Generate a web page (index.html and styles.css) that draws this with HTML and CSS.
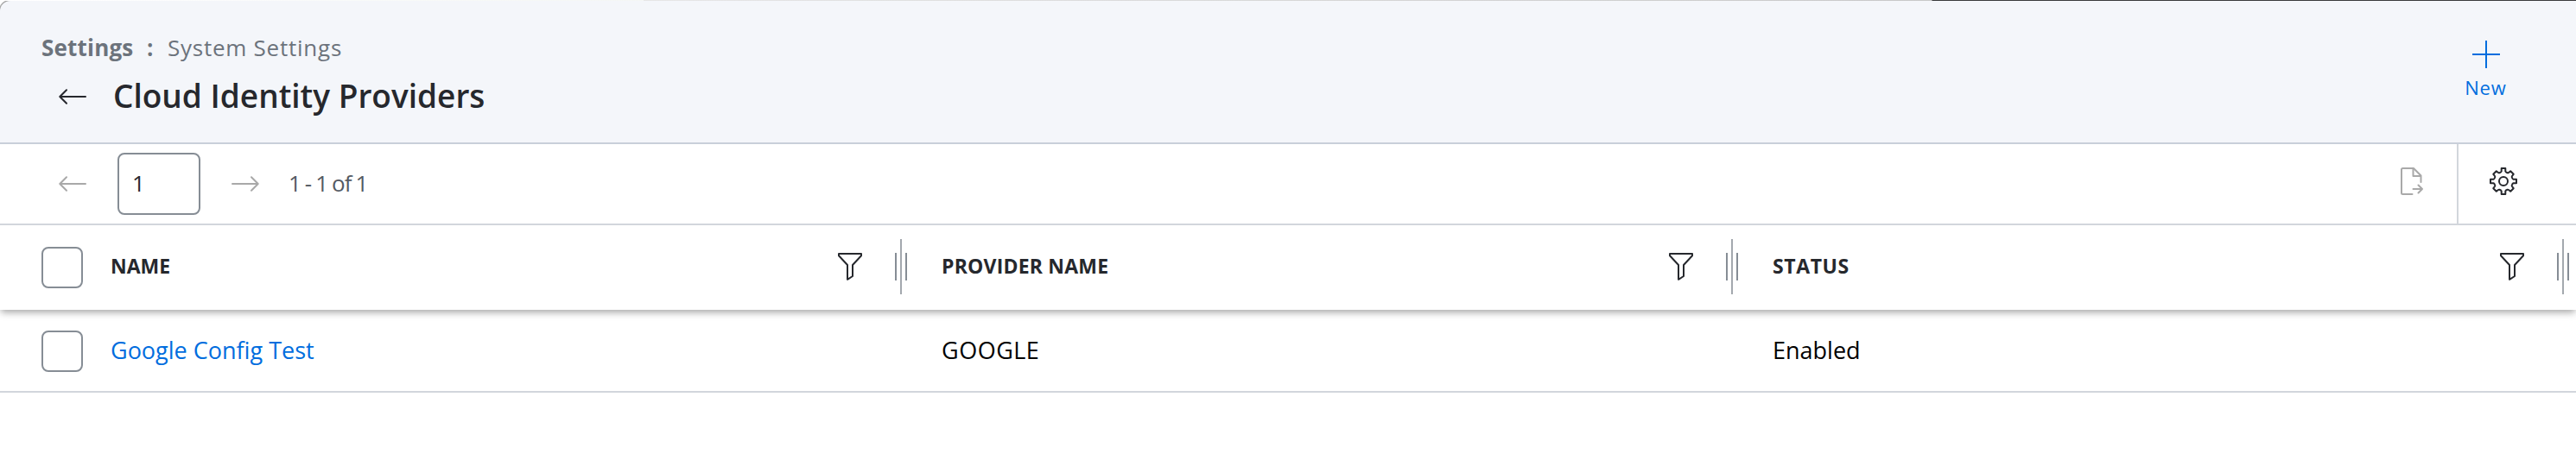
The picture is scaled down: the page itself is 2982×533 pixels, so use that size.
FILE: index.html
```html
<!DOCTYPE html>
<html lang="en">
<head>
    <meta charset="UTF-8">
    <meta name="viewport" content="width=device-width, initial-scale=1.0">
    <title>Cloud Identity Providers</title>
    <link rel="stylesheet" href="styles.css">
</head>
<body>
    <svg class="defs" width="0" height="0">
        <symbol id="arrow" viewBox="0 0 32 18">
            <path d="M31 9H1.5M9 1.2L1.3 9L9 16.8" fill="none" stroke="currentColor" stroke-width="2" stroke-linecap="round" stroke-linejoin="round"/>
        </symbol>
        <symbol id="funnel" viewBox="0 0 28 32">
            <path d="M1 1H27V3.2L17 14V27L11 30.8V14L1 3.2Z" fill="none" stroke="currentColor" stroke-width="2" stroke-linejoin="round"/>
        </symbol>
    </svg>

    <div class="top-edge"></div>
    <header class="page-header">
        <div class="heading">
            <nav class="breadcrumb">
                <a class="crumb-root">Settings</a>
                <span class="crumb-sep">:</span>
                <a class="crumb">System Settings</a>
            </nav>
            <div class="title-row">
                <svg class="arrow" width="32" height="18"><use href="#arrow"/></svg>
                <h1>Cloud Identity Providers</h1>
            </div>
        </div>
        <button class="new-button" type="button">
            <svg width="32" height="32" viewBox="0 0 32 32">
                <path d="M16 0V32M0 16H32" fill="none" stroke="currentColor" stroke-width="2"/>
            </svg>
            <span>New</span>
        </button>
    </header>

    <div class="toolbar">
        <div class="pager">
            <svg class="arrow" width="32" height="18"><use href="#arrow"/></svg>
            <input class="page-input" type="text" value="1">
            <svg class="arrow next" width="32" height="18"><use href="#arrow"/></svg>
            <span class="range">1 - 1 of 1</span>
        </div>
        <div class="tools">
            <svg class="export" width="26" height="32" viewBox="0 0 26 32" fill="none" stroke="currentColor" stroke-width="2" stroke-linecap="round" stroke-linejoin="round">
                <path d="M13.5 31H2.5Q1 31 1 29.5V2.5Q1 1 2.5 1H15L23.5 9.5V17"/>
                <path d="M14.5 1.5V10H23"/>
                <path d="M14.5 25H25M20.5 20.5L25 25L20.5 29.5"/>
            </svg>
            <div class="settings">
                <svg width="32" height="32" viewBox="0 0 32 32" fill="none" stroke="currentColor" stroke-width="2" stroke-linejoin="round">
                    <path d="M13.7 1H18.3V4.5Q18.5 5.4 20.5 6.2Q21.3 6.5 22 6L24.2 4.3L27.7 7.8L26 10Q25.5 10.7 25.8 11.5Q26.6 13.5 27.5 13.7H31V18.3H27.5Q26.6 18.5 25.8 20.5Q25.5 21.3 26 22L27.7 24.2L24.2 27.7L22 26Q21.3 25.5 20.5 25.8Q18.5 26.6 18.3 27.5V31H13.7V27.5Q13.5 26.6 11.5 25.8Q10.7 25.5 10 26L7.8 27.7L4.3 24.2L6 22Q6.5 21.3 6.2 20.5Q5.4 18.5 4.5 18.3H1V13.7H4.5Q5.4 13.5 6.2 11.5Q6.5 10.7 6 10L4.3 7.8L7.8 4.3L10 6Q10.7 6.5 11.5 6.2Q13.5 5.4 13.7 4.5Z"/>
                    <circle cx="16" cy="16" r="5"/>
                </svg>
            </div>
        </div>
    </div>

    <div class="table">
        <div class="row head">
            <div class="check-cell"><input type="checkbox"></div>
            <div class="cell name">
                <span>NAME</span>
                <svg class="funnel" width="28" height="32"><use href="#funnel"/></svg>
                <div class="resizer"><i></i><i></i><i></i></div>
            </div>
            <div class="cell provider">
                <span>PROVIDER NAME</span>
                <svg class="funnel" width="28" height="32"><use href="#funnel"/></svg>
                <div class="resizer"><i></i><i></i><i></i></div>
            </div>
            <div class="cell status">
                <span>STATUS</span>
                <svg class="funnel" width="28" height="32"><use href="#funnel"/></svg>
                <div class="resizer"><i></i><i></i><i></i></div>
            </div>
        </div>
        <div class="row item">
            <div class="check-cell"><input type="checkbox"></div>
            <div class="cell name"><a>Google Config Test</a></div>
            <div class="cell provider">GOOGLE</div>
            <div class="cell status">Enabled</div>
        </div>
    </div>
</body>
</html>
```
FILE: styles.css
```css
* {
    box-sizing: border-box;
}
body {
    margin: 0;
    background-color: #fff;
    color: #000;
    font-family: "Open Sans", Lato, sans-serif;
    font-size: 27px;
    overflow: hidden;
}
svg {
    display: block;
    flex: none;
}
.defs {
    position: absolute;
}
.top-edge {
    height: 1px;
    background: linear-gradient(to right, #fff 0, #f4f6f4 745px, #e6e6e6 745px, #c8c8c8 2236px, #3a3a3c 2237px);
}

/* header */
.page-header {
    display: flex;
    justify-content: space-between;
    height: 166px;
    padding: 38px 80px 0 48px;
    background-color: #f4f6fa;
    border-bottom: 2px solid #c9cfda;
    border-top-left-radius: 12px;
    box-shadow: -1px -1px 0 #a8a8a8;
    clip-path: inset(0);
}
.breadcrumb {
    display: flex;
    height: 32px;
    line-height: 32px;
    font-size: 26px;
    color: #6c737c;
}
.crumb-root {
    width: 122px;
    font-weight: 700;
    letter-spacing: 0.2px;
}
.crumb-sep {
    width: 24px;
    font-weight: 700;
}
.crumb {
    letter-spacing: 0.75px;
}
.title-row {
    display: flex;
    align-items: center;
    height: 50px;
    margin-top: 16px;
    padding-left: 20px;
    color: #26282d;
}
h1 {
    margin: 0 0 2px 31px;
    font-size: 37px;
    line-height: 48px;
    font-weight: 600;
}
.new-button {
    display: flex;
    flex-direction: column;
    align-items: center;
    width: 49px;
    height: 80px;
    padding: 0;
    margin-top: 8px;
    border: none;
    background: none;
    color: #006dde;
    font-family: inherit;
    font-size: 22px;
    line-height: 28px;
    letter-spacing: 0.9px;
}
.new-button span {
    margin-top: 8px;
}

/* toolbar */
.toolbar {
    display: flex;
    justify-content: space-between;
    height: 94px;
    border-bottom: 2px solid #d2d6dc;
}
.pager {
    display: flex;
    align-items: center;
    padding-left: 68px;
}
.pager .arrow {
    color: #a9a9a9;
}
.arrow.next {
    transform: scaleX(-1);
}
.page-input {
    width: 96px;
    height: 72px;
    margin: 0 36px;
    padding: 0 0 3px 15px;
    border: 2px solid #868d95;
    border-radius: 8px;
    font-family: inherit;
    font-size: 26px;
    color: #26282d;
}
.range {
    margin: 0 0 3px 34px;
    font-size: 26px;
    color: #545a63;
    letter-spacing: -0.8px;
    word-spacing: -1.2px;
}
.tools {
    display: flex;
}
.export {
    margin: 27px 39px 0 0;
    color: #a9a9a9;
}
.settings {
    width: 138px;
    padding: 27px 0 0 36px;
    border-left: 2px solid #d2d6dc;
    color: #26282d;
}

/* table */
.row {
    display: grid;
    grid-template-columns: 128px 922px 962px 962px;
}
.head {
    position: relative;
    height: 98px;
    background-color: #fff;
    box-shadow: 0 4px 8px -1px rgba(0, 0, 0, 0.35);
    clip-path: inset(0 0 -14px 0);
    font-size: 23px;
    font-weight: 700;
    color: #26282d;
}
.item {
    height: 96px;
    border-bottom: 2px solid #d2d6dc;
}
.check-cell {
    display: flex;
    align-items: center;
    padding-left: 48px;
}
.item .check-cell {
    padding-top: 2px;
}
input[type="checkbox"] {
    appearance: none;
    width: 48px;
    height: 48px;
    margin: 0;
    border: 2px solid #868d95;
    border-radius: 8px;
    background-color: #fff;
}
.cell {
    display: flex;
    align-items: center;
}
.cell.provider,
.cell.status {
    padding-left: 40px;
}
.head .provider {
    letter-spacing: 0.2px;
}
.head .status {
    letter-spacing: 0.6px;
}
.head .cell span {
    margin-bottom: 5px;
}
.item .cell {
    padding-bottom: 2px;
}
.item .name {
    color: #006dde;
}
.item .provider {
    letter-spacing: 0.5px;
}
.funnel {
    margin: 0 38px 2px auto;
}
.resizer {
    display: flex;
    align-items: center;
    gap: 4px;
    margin-bottom: 2px;
}
.resizer i {
    width: 2px;
    height: 32px;
    background-color: #868d95;
}
.resizer i:nth-child(2) {
    height: 64px;
    background-color: #a3a8ae;
}
```
